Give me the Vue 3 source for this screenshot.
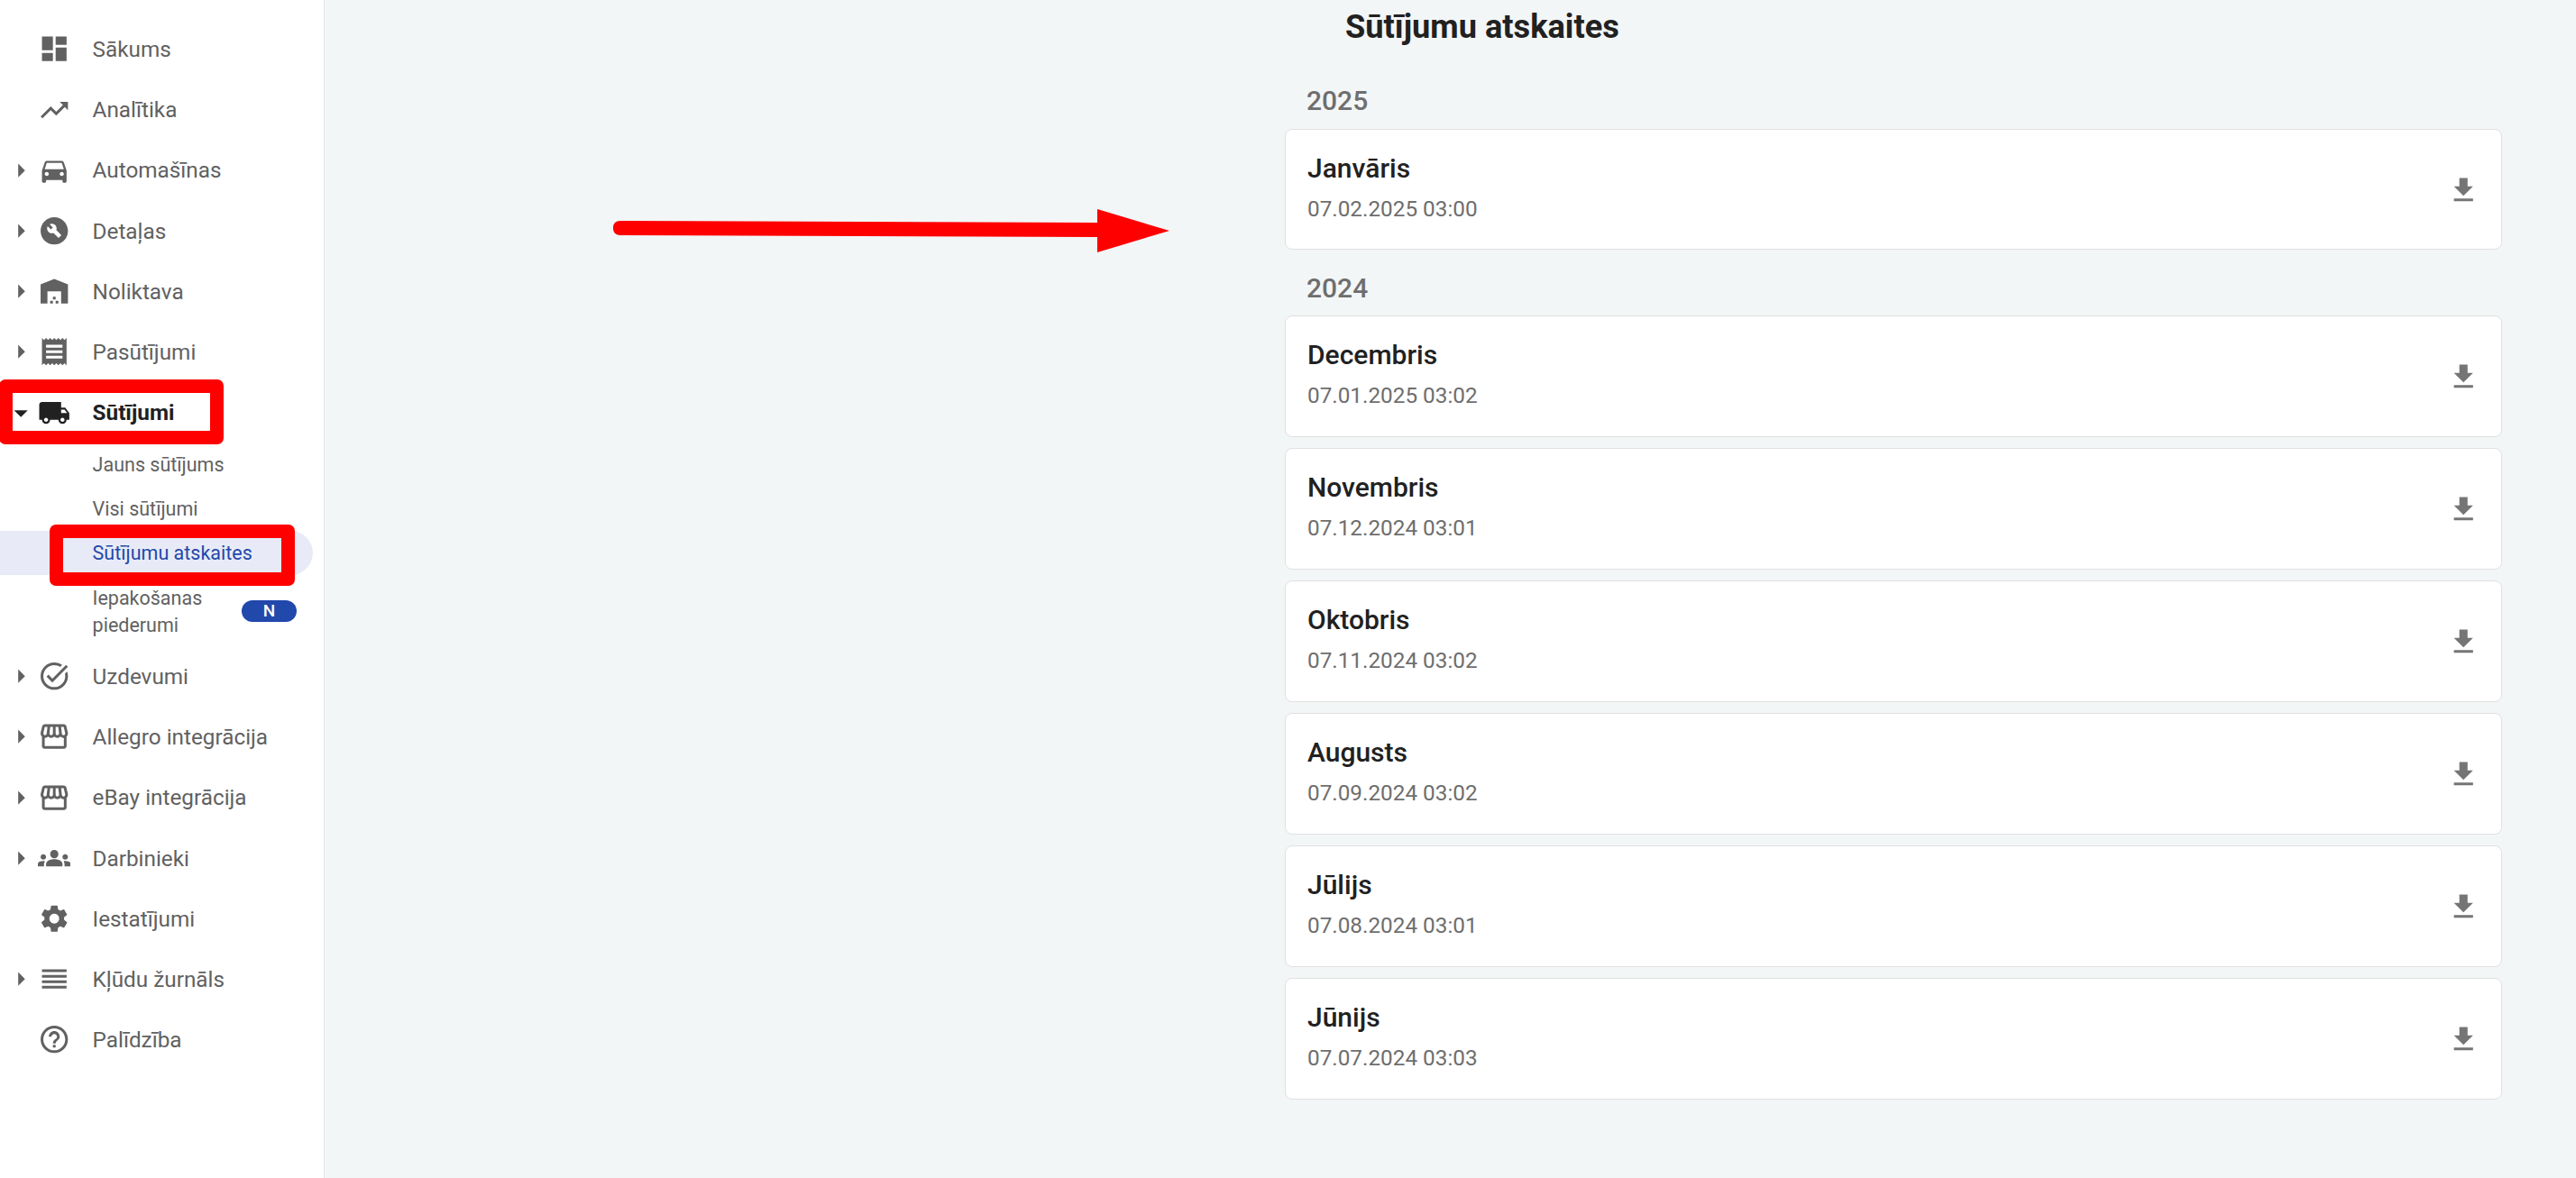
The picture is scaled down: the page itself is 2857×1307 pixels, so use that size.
<script setup>
const P = {
  dashboard: 'M3 13h8V3H3v10zm0 8h8v-6H3v6zm10 0h8V11h-8v10zm0-18v6h8V3h-8z',
  trend: 'M16 6l2.29 2.29-4.88 4.88-4-4L2 16.59 3.41 18l6-6 4 4 6.3-6.29L22 12V6z',
  car: 'M18.92 6.01C18.72 5.42 18.16 5 17.5 5h-11c-.66 0-1.21.42-1.42 1.01L3 12v8c0 .55.45 1 1 1h1c.55 0 1-.45 1-1v-1h12v1c0 .55.45 1 1 1h1c.55 0 1-.45 1-1v-8l-2.08-5.99zM6.5 16c-.83 0-1.5-.67-1.5-1.5S5.67 13 6.5 13s1.5.67 1.5 1.5S7.33 16 6.5 16zm11 0c-.83 0-1.5-.67-1.5-1.5s.67-1.5 1.5-1.5 1.5.67 1.5 1.5-.67 1.5-1.5 1.5zM5 11l1.5-4.5h11L19 11H5z',
  build: 'M12 2C6.48 2 2 6.48 2 12s4.48 10 10 10 10-4.48 10-10S17.52 2 12 2zm4.9 13.49l-1.4 1.4c-.2.2-.51.2-.71 0l-3.41-3.41c-1.22.43-2.64.17-3.62-.81-1.11-1.11-1.3-2.79-.59-4.1l2.35 2.35 1.41-1.41-2.35-2.34c1.32-.71 2.99-.52 4.1.59.98.98 1.24 2.4.81 3.62l3.41 3.41c.19.19.19.51 0 .7z',
  warehouse: 'M22 21V7L12 3 2 7v14h5v-9h10v9h5zm-11-2H9v2h2v-2zm2-3h-2v2h2v-2zm2 3h-2v2h2v-2z',
  receipt: 'M18 17H6v-2h12v2zm0-4H6v-2h12v2zm0-4H6V7h12v2zM3 22l1.5-1.5L6 22l1.5-1.5L9 22l1.5-1.5L12 22l1.5-1.5L15 22l1.5-1.5L18 22l1.5-1.5L21 22V2l-1.5 1.5L18 2l-1.5 1.5L15 2l-1.5 1.5L12 2l-1.5 1.5L9 2 7.5 3.5 6 2 4.5 3.5 3 2v20z',
  truck: 'M20 8h-3V4H3c-1.1 0-2 .9-2 2v11h2c0 1.66 1.34 3 3 3s3-1.34 3-3h6c0 1.66 1.34 3 3 3s3-1.34 3-3h2v-5l-3-4zM6 18.5c-.83 0-1.5-.67-1.5-1.5s.67-1.5 1.5-1.5 1.5.67 1.5 1.5-.67 1.5-1.5 1.5zm13.5-9l1.96 2.5H17V9.5h2.5zm-1.5 9c-.83 0-1.5-.67-1.5-1.5s.67-1.5 1.5-1.5 1.5.67 1.5 1.5-.67 1.5-1.5 1.5z',
  task: 'M22 5.18L10.59 16.6l-4.24-4.24 1.41-1.41 2.83 2.83 10-10L22 5.18zm-2.21 5.04c.13.57.21 1.17.21 1.78 0 4.42-3.58 8-8 8s-8-3.58-8-8 3.58-8 8-8c1.58 0 3.04.46 4.28 1.25l1.44-1.44C16.1 2.67 14.13 2 12 2 6.48 2 2 6.48 2 12s4.48 10 10 10 10-4.48 10-10c0-1.19-.22-2.33-.6-3.39l-1.61 1.61z',
  store: 'M21.9 8.89l-1.05-4.37c-.22-.9-1-1.52-1.91-1.52H5.05c-.9 0-1.69.63-1.9 1.52L2.1 8.89c-.24 1.02-.02 2.06.62 2.88.08.11.19.19.28.29V19c0 1.1.9 2 2 2h14c1.1 0 2-.9 2-2v-6.94c.09-.09.2-.18.28-.28.64-.82.87-1.87.62-2.89zm-2.99-3.9l1.05 4.37c.1.42.01.84-.25 1.17-.14.18-.44.47-.94.47-.61 0-1.14-.49-1.21-1.14L16.98 5l1.93-.01zM13 5h1.96l.54 4.52c.05.39-.07.78-.33 1.07-.22.26-.54.41-.95.41-.67 0-1.22-.59-1.22-1.31V5zM8.49 9.52L9.04 5H11v4.69c0 .72-.55 1.31-1.29 1.31-.34 0-.65-.15-.89-.41-.25-.29-.37-.68-.33-1.07zm-4.45-.16L5.05 5h1.97l-.58 4.86c-.08.65-.6 1.14-1.21 1.14-.49 0-.8-.29-.93-.47-.27-.32-.36-.75-.26-1.17zM5 19v-6.03c.08.01.15.03.23.03.87 0 1.66-.36 2.24-.95.6.6 1.4.95 2.31.95.87 0 1.65-.36 2.23-.93.59.57 1.39.93 2.29.93.84 0 1.64-.35 2.24-.95.58.59 1.37.95 2.24.95.08 0 .15-.02.23-.03V19H5z',
  groups: 'M12 12.75c1.63 0 3.07.39 4.24.9 1.08.48 1.76 1.56 1.76 2.73V18H6v-1.61c0-1.18.68-2.26 1.76-2.73 1.17-.52 2.61-.91 4.24-.91zM4 13c1.1 0 2-.9 2-2s-.9-2-2-2-2 .9-2 2 .9 2 2 2zm1.13 1.1c-.37-.06-.74-.1-1.13-.1-.99 0-1.93.21-2.78.58C.48 14.9 0 15.62 0 16.43V18h4.5v-1.61c0-.83.23-1.61.63-2.29zM20 13c1.1 0 2-.9 2-2s-.9-2-2-2-2 .9-2 2 .9 2 2 2zm4 3.43c0-.81-.48-1.53-1.22-1.85-.85-.37-1.79-.58-2.78-.58-.39 0-.76.04-1.13.1.4.68.63 1.46.63 2.29V18H24v-1.57zM12 6c1.66 0 3 1.34 3 3s-1.34 3-3 3-3-1.34-3-3 1.34-3 3-3z',
  settings: 'M19.14 12.94c.04-.3.06-.61.06-.94 0-.32-.02-.64-.07-.94l2.03-1.58c.18-.14.23-.41.12-.61l-1.92-3.32c-.12-.22-.37-.29-.59-.22l-2.39.96c-.5-.38-1.03-.7-1.62-.94l-.36-2.54c-.04-.24-.24-.41-.48-.41h-3.84c-.24 0-.43.17-.47.41l-.36 2.54c-.59.24-1.13.57-1.62.94l-2.39-.96c-.22-.08-.47 0-.59.22L2.74 8.87c-.12.21-.08.47.12.61l2.03 1.58c-.05.3-.09.63-.09.94s.02.64.07.94l-2.03 1.58c-.18.14-.23.41-.12.61l1.92 3.32c.12.22.37.29.59.22l2.39-.96c.5.38 1.03.7 1.62.94l.36 2.54c.05.24.24.41.48.41h3.84c.24 0 .44-.17.47-.41l.36-2.54c.59-.24 1.13-.56 1.62-.94l2.39.96c.22.08.47 0 .59-.22l1.92-3.32c.12-.22.07-.47-.12-.61l-2.01-1.58zM12 15.6c-1.98 0-3.6-1.62-3.6-3.6s1.62-3.6 3.6-3.6 3.6 1.62 3.6 3.6-1.62 3.6-3.6 3.6z',
  reorder: 'M3 15h18v-2H3v2zm0 4h18v-2H3v2zm0-8h18V9H3v2zm0-6v2h18V5H3z',
  help: 'M11 18h2v-2h-2v2zm1-16C6.48 2 2 6.48 2 12s4.48 10 10 10 10-4.48 10-10S17.52 2 12 2zm0 18c-4.41 0-8-3.59-8-8s3.59-8 8-8 8 3.59 8 8-3.59 8-8 8zm0-14c-2.21 0-4 1.79-4 4h2c0-1.1.9-2 2-2s2 .9 2 2c0 2-3 1.75-3 5h2c0-2.25 3-2.5 3-5 0-2.21-1.79-4-4-4z',
  download: 'M19 9h-4V3H9v6H5l7 7 7-7zM5 18v2h14v-2H5z'
}

const topNav = [
  { label: 'Sākums', icon: P.dashboard },
  { label: 'Analītika', icon: P.trend },
  { label: 'Automašīnas', icon: P.car, arrow: true },
  { label: 'Detaļas', icon: P.build, arrow: true },
  { label: 'Noliktava', icon: P.warehouse, arrow: true },
  { label: 'Pasūtījumi', icon: P.receipt, arrow: true }
]
const bottomNav = [
  { label: 'Uzdevumi', icon: P.task, arrow: true },
  { label: 'Allegro integrācija', icon: P.store, arrow: true },
  { label: 'eBay integrācija', icon: P.store, arrow: true },
  { label: 'Darbinieki', icon: P.groups, arrow: true },
  { label: 'Iestatījumi', icon: P.settings },
  { label: 'Kļūdu žurnāls', icon: P.reorder, arrow: true },
  { label: 'Palīdzība', icon: P.help }
]
const sections = [
  { year: '2025', items: [{ m: 'Janvāris', d: '07.02.2025 03:00' }] },
  {
    year: '2024',
    items: [
      { m: 'Decembris', d: '07.01.2025 03:02' },
      { m: 'Novembris', d: '07.12.2024 03:01' },
      { m: 'Oktobris', d: '07.11.2024 03:02' },
      { m: 'Augusts', d: '07.09.2024 03:02' },
      { m: 'Jūlijs', d: '07.08.2024 03:01' },
      { m: 'Jūnijs', d: '07.07.2024 03:03' }
    ]
  }
]
</script>

<template>
  <div class="page">
    <aside class="sidebar">
      <div v-for="n in topNav" :key="n.label" class="row">
        <span class="caret">
          <svg v-if="n.arrow" viewBox="0 0 24 24"><path d="M10 17l5-5-5-5v10z" /></svg>
        </span>
        <svg class="ico" viewBox="0 0 24 24"><path :d="n.icon" /></svg>
        <span class="label">{{ n.label }}</span>
      </div>

      <div class="row open">
        <span class="caret"><svg viewBox="0 0 24 24"><path d="M7 10l5 5 5-5z" /></svg></span>
        <svg class="ico" viewBox="0 0 24 24"><path :d="P.truck" /></svg>
        <span class="label">Sūtījumi</span>
      </div>
      <div class="sub">Jauns sūtījums</div>
      <div class="sub">Visi sūtījumi</div>
      <div class="sub active">Sūtījumu atskaites</div>
      <div class="sub tall">
        <span class="sub-text">Iepakošanas piederumi</span>
        <span class="badge">N</span>
      </div>

      <div v-for="n in bottomNav" :key="n.label" class="row">
        <span class="caret">
          <svg v-if="n.arrow" viewBox="0 0 24 24"><path d="M10 17l5-5-5-5v10z" /></svg>
        </span>
        <svg class="ico" viewBox="0 0 24 24"><path :d="n.icon" /></svg>
        <span class="label">{{ n.label }}</span>
      </div>
    </aside>

    <main class="main">
      <h1 class="title">Sūtījumu atskaites</h1>
      <section v-for="s in sections" :key="s.year" class="section">
        <h2 class="year">{{ s.year }}</h2>
        <div class="cards">
          <article v-for="c in s.items" :key="c.m" class="card">
            <div class="card-text">
              <div class="month">{{ c.m }}</div>
              <div class="date">{{ c.d }}</div>
            </div>
            <svg class="dl" viewBox="0 0 24 24"><path :d="P.download" /></svg>
          </article>
        </div>
      </section>
    </main>

    <div class="mark mark-a"></div>
    <div class="mark mark-b"></div>
    <svg class="arrow" width="630" height="60" viewBox="0 0 630 60">
      <path d="M9 15 L538 17 L538 2 L618 26 L538 50 L538 33 L9 31 Q1 31 1 23 Q1 15 9 15 Z" fill="#ff0000" />
    </svg>
  </div>
</template>

<style scoped>
.page {
  position: relative;
  display: flex;
  width: 2857px;
  height: 1307px;
  overflow: hidden;
  background: #f3f6f7;
  font-family: Roboto, "Noto Sans", sans-serif;
}
.sidebar {
  flex: none;
  box-sizing: border-box;
  width: 360px;
  padding-top: 21px;
  background: #fff;
  border-right: 1px solid #e4e7e9;
}
.row {
  display: flex;
  align-items: center;
  height: 67.2px;
  padding-left: 5.4px;
  color: #616161;
}
.caret {
  flex: none;
  width: 36.4px;
  height: 36.4px;
}
.caret svg,
.ico {
  display: block;
  width: 36.4px;
  height: 36.4px;
  fill: currentColor;
}
.ico {
  flex: none;
}
.label {
  margin-left: 24.4px;
  font-size: 24.3px;
  white-space: nowrap;
}
.open {
  color: #212121;
}
.open .label {
  font-weight: 700;
}
.sub {
  display: flex;
  align-items: center;
  box-sizing: border-box;
  width: 347px;
  height: 49px;
  padding-left: 102.6px;
  font-size: 21.5px;
  color: #616161;
  border-radius: 0 25px 25px 0;
}
.active {
  background: #e8ebf7;
  color: #2148ab;
}
.tall {
  height: 78.6px;
  padding-right: 18px;
  justify-content: space-between;
  line-height: 30px;
}
.sub-text {
  width: 150px;
  padding-top: 2px;
}
.badge {
  flex: none;
  width: 61px;
  height: 24px;
  line-height: 24px;
  text-align: center;
  background: #2148ab;
  color: #fff;
  border-radius: 12px;
  font-size: 19px;
  font-weight: 500;
}
.main {
  flex: 1;
  padding-left: 1065px;
  padding-right: 82px;
}
.title {
  margin: 8px 0 0 67px;
  height: 44px;
  font-size: 36.2px;
  line-height: 44px;
  font-weight: 700;
  color: #212121;
}
.section {
  display: flex;
  flex-direction: column;
}
.year {
  margin: 0;
  height: 38px;
  padding: 0 0 0 24px;
  font-size: 30px;
  line-height: 38px;
  font-weight: 500;
  color: #6e6e6e;
}
.section:nth-of-type(1) .year {
  margin-top: 41px;
  margin-bottom: 12px;
}
.section:nth-of-type(2) .year {
  margin-top: 24px;
  margin-bottom: 11px;
}
.cards {
  display: flex;
  flex-direction: column;
  gap: 12.6px;
}
.card {
  display: flex;
  align-items: center;
  justify-content: space-between;
  box-sizing: border-box;
  height: 134.4px;
  padding: 0 24px 0 24px;
  background: #fff;
  border: 1.4px solid #e0e0e0;
  border-radius: 8px;
}
.card-text {
  margin-top: -5px;
}
.month {
  font-size: 30px;
  line-height: 34px;
  font-weight: 500;
  color: #212121;
}
.date {
  margin-top: 14px;
  font-size: 24.3px;
  line-height: 28px;
  color: #6e6e6e;
}
.dl {
  flex: none;
  width: 36.4px;
  height: 36.4px;
  margin-top: 1px;
  fill: #757575;
}
.mark {
  position: absolute;
  box-sizing: border-box;
  border: 15px solid #ff0000;
  border-radius: 7px;
}
.mark-a {
  left: -1px;
  top: 421px;
  width: 249px;
  height: 72px;
}
.mark-b {
  left: 55px;
  top: 582px;
  width: 272px;
  height: 68px;
}
.arrow {
  position: absolute;
  left: 679px;
  top: 230px;
}
</style>

<style>
html, body { margin: 0; background: #f3f6f7; }
</style>
